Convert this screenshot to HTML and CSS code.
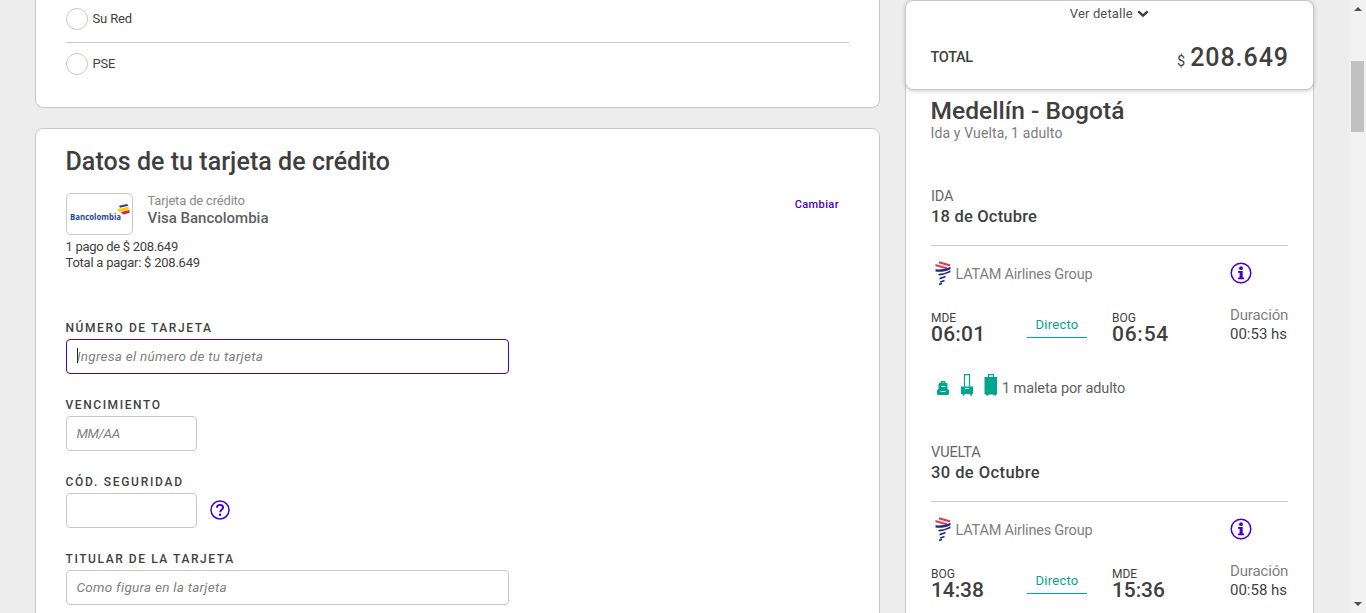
FILE: index.html
```
<!DOCTYPE html>
<html lang="es">
<head>
<meta charset="utf-8">
<title>Datos de tu tarjeta de crédito</title>
<link rel="stylesheet" href="styles.css">
</head>
<body>
<svg class="sprite" width="0" height="0">
  <symbol id="latam" viewBox="0 0 18 24">
    <path d="M5 .3 16 3.300V5.500L5 2.500Z" fill="#e33a58"/>
    <path d="M1.500 3 13 6.300V8.300L1.500 5.200Z" fill="#e33a58"/>
    <path d="M1.500 8.300C7 8.700 12 7.800 16.500 5.700V8.200C12 10.400 7 11.200 1.500 10.600ZM4 13C8 12.700 12.500 11.700 16.500 9.300V11.300C12 13.300 8 14.300 5 14.600ZM5.500 16.700 11.500 14.800V16.600L5.500 18.400ZM6 20.200 10.500 18.700V20.400L6 21.700ZM5 22.600 8 21.800V23.500L5 24Z" fill="#1b2f82"/>
  </symbol>
  <symbol id="info" viewBox="0 0 22 22">
    <circle cx="11" cy="11" r="9.800" fill="none" stroke="#4300d2" stroke-width="1.500"/>
    <circle cx="11" cy="6.200" r="1.900" fill="#4300d2"/>
    <path d="M8 9h4.700v6.500H14v1.800H8v-1.800h1.600v-4.700H8Z" fill="#4300d2"/>
  </symbol>
  <symbol id="bags" viewBox="0 0 60 22">
    <g fill="#00a58e">
      <path d="M1.500 10Q1.800 8.500 3.500 8.500H8.500Q10.200 8.500 10.500 10V15H11V21H1V15H1.500ZM0 16h1.500v4.500H0ZM10.500 16h1.500v4.500h-1.500Z"/>
      <path d="M24 12.500h12V20H24ZM25.500 20h2v1.500h-2ZM33 20h2v1.500h-2Z"/>
      <path d="M47.500 3h13v17.500h-13ZM49 20h2.500v1.500H49ZM56.500 20H59v1.500h-2.500Z"/>
    </g>
    <path d="M27.500 12.500V.7h5V12.500M51.500 3V.7h5V3M4.500 9V7.500h3V9" fill="none" stroke="#00a58e" stroke-width="1.200"/>
    <path d="M4 12.500h4.500M3.500 17.500h5M28 14.500h4" stroke="#fff" stroke-width=".9"/>
  </symbol>
</svg>
<div class="page">
  <main class="main">
    <section class="card methods">
      <div class="method"><span class="radio"></span><span>Su Red</span></div>
      <div class="method last"><span class="radio"></span><span>PSE</span></div>
    </section>
    <section class="card form">
      <h1 class="title">Datos de tu tarjeta de crédito</h1>
      <div class="bank">
        <div class="bank-logo">
          <svg width="62" height="24" viewBox="0 0 62 24"><text class="logo-text" x="0" y="16.500" textLength="51" lengthAdjust="spacingAndGlyphs">Bancolombia</text><path d="M49 2.700 57 1 58.500 2.700 50 4.800Z" fill="#1f4795"/><path d="M47.500 6 58.500 3.700 59 6.500 48.500 9Z" fill="#fc0"/><path d="M51 9 59.500 7V10L53 11.500Z" fill="#e8202c"/></svg>
        </div>
        <div class="bank-info">
          <div class="bank-type">Tarjeta de crédito</div>
          <div class="bank-name">Visa Bancolombia</div>
        </div>
        <a class="change">Cambiar</a>
      </div>
      <div class="pay">1 pago de $ 208.649</div>
      <div class="pay pay-total">Total a pagar: $ 208.649</div>
      <div class="fields">
        <div class="field"><div class="label">NÚMERO DE TARJETA</div><div class="input focus"><i class="caret"></i><span>Ingresa el número de tu tarjeta</span></div></div>
        <div class="field"><div class="label">VENCIMIENTO</div><div class="input short">MM/AA</div></div>
        <div class="field"><div class="label label-code">CÓD. SEGURIDAD</div><div class="row"><div class="input short"></div>
          <svg class="help" width="20" height="20" viewBox="0 0 20 20"><circle cx="10" cy="10" r="9" fill="none" stroke="#4300d2" stroke-width="1.500"/><path d="M6.900 7.700Q7 4.900 10 4.900T13.100 7.400C13.100 9.600 10.200 9.400 10.200 12.200" fill="none" stroke="#4300d2" stroke-width="1.900"/><circle cx="10.100" cy="14.800" r="1.250" fill="#4300d2"/></svg></div></div>
        <div class="field"><div class="label">TITULAR DE LA TARJETA</div><div class="input">Como figura en la tarjeta</div></div>
      </div>
    </section>
  </main>
  <aside class="aside">
    <div class="summary">
      <div class="detail"><span>Ver detalle</span><svg width="12" height="8" viewBox="0 0 12 8"><path d="M1.300 1.300 6 5.700 10.700 1.300" fill="none" stroke="#3c3c3c" stroke-width="2.300"/></svg></div>
      <div class="total"><span class="total-label">TOTAL</span><div class="price"><span class="cur">$</span><span class="amount">208.649</span></div></div>
    </div>
    <div class="trip">
      <h2 class="route">Medellín - Bogotá</h2>
      <div class="pax">Ida y Vuelta, 1 adulto</div>
      <section class="segment">
        <div class="dir">IDA</div>
        <div class="date">18 de Octubre</div>
        <div class="airline"><svg width="18" height="24"><use href="#latam"/></svg><span class="airline-name">LATAM Airlines Group</span><svg class="info" width="22" height="22"><use href="#info"/></svg></div>
        <div class="times">
          <div class="stop from"><div class="code">MDE</div><div class="hour">06:01</div></div>
          <div class="direct">Directo</div>
          <div class="stop to"><div class="code">BOG</div><div class="hour wide">06:54</div></div>
          <div class="dur"><div class="dur-label">Duración</div><div>00:53 hs</div></div>
        </div>
        <div class="bags"><svg width="61" height="22" viewBox="0 0 61 22"><use href="#bags" width="60" height="22"/></svg><span class="bags-text">1 maleta por adulto</span></div>
      </section>
      <section class="segment">
        <div class="dir">VUELTA</div>
        <div class="date wide">30 de Octubre</div>
        <div class="airline"><svg width="18" height="24"><use href="#latam"/></svg><span class="airline-name">LATAM Airlines Group</span><svg class="info" width="22" height="22"><use href="#info"/></svg></div>
        <div class="times">
          <div class="stop from"><div class="code">BOG</div><div class="hour tight">14:38</div></div>
          <div class="direct">Directo</div>
          <div class="stop to"><div class="code">MDE</div><div class="hour tight">15:36</div></div>
          <div class="dur"><div class="dur-label">Duración</div><div>00:58 hs</div></div>
        </div>
      </section>
    </div>
  </aside>
  <div class="scrollbar"><i class="up"></i><i class="thumb"></i><i class="down"></i></div>
</div>
</body>
</html>
```
FILE: styles.css
```
*{box-sizing:border-box}
body{margin:0;background:#ededed;font-family:Roboto,"Liberation Sans",sans-serif;color:#3f3f3f;overflow:hidden}
.sprite{position:absolute}
svg{display:block;flex:none}
h1,h2{margin:0;font-weight:500}
.page{display:flex;height:613px;overflow:hidden}
.main{width:845px;margin-left:35px;flex:none}
.card{background:#fff;border:1px solid #c8c8c8;border-radius:8px;padding:0 30px}
.methods{height:108px;border-top:0;border-radius:0 0 8px 8px}
.method{display:flex;align-items:center;height:43px;padding-bottom:5px;border-bottom:1px solid #c8c8c8;font-size:13px;letter-spacing:-.15px;gap:4.500px}
.method.last{border:0;padding-bottom:2px}
.radio{width:22px;height:22px;border:1px solid #c8c8c8;border-radius:50%}
.form{margin-top:20px;height:520px;padding-top:18px}
.title{font-size:25px;line-height:30px;margin-left:-.5px;letter-spacing:.05px;white-space:nowrap}
.bank{display:flex;margin-top:16px;height:42px}
.bank-logo{width:67px;height:42px;border:1px solid #c8c8c8;border-radius:5px;padding:9px 0 0 3px}
.logo-text{font:700 9.500px "Open Sans",sans-serif;fill:#1f4795}
.bank-info{margin-left:14.500px}
.bank-type{font-size:13px;line-height:16px;color:#8a8a8a;letter-spacing:-.18px}
.bank-name{font-size:15px;line-height:18px;font-weight:500;color:#5f5f5f}
.change{margin:4px 10px 0 auto;font-size:11px;line-height:16px;font-weight:500;letter-spacing:.4px;color:#4300d2}
.pay{font-size:13px;line-height:16px;margin:4px 0 0 -.5px;letter-spacing:-.3px}
.pay-total{margin-top:0;letter-spacing:-.23px}
.fields{margin-top:49px}
.field{height:77px}
.label{font-size:12px;line-height:16px;font-weight:500;height:19px;margin-left:-.5px;letter-spacing:1.570px}
.label-code{letter-spacing:1.720px}
.row{display:flex;align-items:center;gap:13px}
.help{margin-bottom:2px}
.input{display:flex;align-items:center;width:443px;height:35px;border:1px solid #c8c8c8;border-radius:4px;padding:0 9.500px 2px;font-size:13.500px;letter-spacing:.27px;font-style:italic;color:#808080;background:#fff}
.input.focus{border-color:#4300d2}
.input.short{width:131px;letter-spacing:-.4px}
.caret{width:1px;height:15px;background:#222;margin:0 -1px 0 .5px}
.aside{width:409px;margin-left:25px;flex:none}
.summary{height:90px;background:#fff;border:1px solid #c8c8c8;border-radius:8px;box-shadow:0 1px 4px rgba(0,0,0,.2);padding:0 25px 0 24.500px;position:relative}
.detail{display:flex;align-items:center;justify-content:center;gap:4px;font-size:13px;letter-spacing:.16px;line-height:16px;padding-top:5px;color:#505050}
.total{display:flex;align-items:center;justify-content:space-between;margin-top:20px;height:30px}
.total-label{font-size:14.500px;letter-spacing:-.3px;font-weight:500}
.price{display:flex;align-items:baseline;gap:5px;margin-right:-1px}
.cur{font-size:14.500px}
.amount{font-size:25px;font-weight:500;letter-spacing:.95px}
.trip{height:532px;margin-top:-9px;background:#fff;border:1px solid #c8c8c8;border-width:0 1px;padding:16px 25px 0}
.route{font-size:24.500px;line-height:28px;margin-left:-.5px;letter-spacing:.05px}
.pax{font-size:14px;line-height:16px;color:#7c7c7c;margin:0 0 45px -.5px;letter-spacing:.14px}
.segment{height:256px}
.dir{font-size:14.500px;line-height:20px;height:20px;padding-top:1px;color:#666;letter-spacing:-.1px}
.date{font-size:16.500px;line-height:22px;font-weight:500;height:40px;border-bottom:1px solid #c8c8c8;letter-spacing:.2px}
.date.wide{letter-spacing:.43px}
.airline{display:flex;align-items:center;height:34px;margin-top:10px;padding-left:3px;font-size:14.500px;letter-spacing:-.21px;color:#808080;gap:3.500px}
.airline-name{padding-top:2px}
.info{margin-left:auto;margin-right:36px}
.times{display:flex;height:38px;margin-top:15px}
.from{width:96px;flex:none}
.direct{width:60px;flex:none;height:33px;border-bottom:1px solid #00a58e;color:#00a58e;font-size:13px;letter-spacing:.27px;line-height:40px;text-align:center}
.to{width:118px;flex:none;padding-left:25px}
.code{font-size:12px;line-height:14px;padding-top:6px;height:18px}
.hour{font-size:21px;line-height:22px;font-weight:500;letter-spacing:.2px}
.hour.wide{letter-spacing:.75px}
.hour.tight{letter-spacing:-.1px}
.dur{padding:1px 0 0 25px;font-size:15px;line-height:19px;white-space:nowrap}
.dur-label{color:#808080;letter-spacing:-.15px}
.bags{display:flex;align-items:center;margin-top:31px;height:22px;padding-left:6px;gap:4px;font-size:14.500px;letter-spacing:-.1px;color:#606060}
.bags-text{padding-top:7px}
.scrollbar{display:flex;flex-direction:column;align-items:center;width:17px;height:613px;margin-left:35px;background:#f1f1f1;flex:none}
.up,.down{border:4px solid transparent;border-top:0;border-bottom:4px solid #505050;margin-top:7px}
.thumb{width:13px;height:71px;margin-top:50px;background:#c1c1c1}
.down{border-bottom:0;border-top:4px solid #505050;margin-top:auto;margin-bottom:7px}
```
